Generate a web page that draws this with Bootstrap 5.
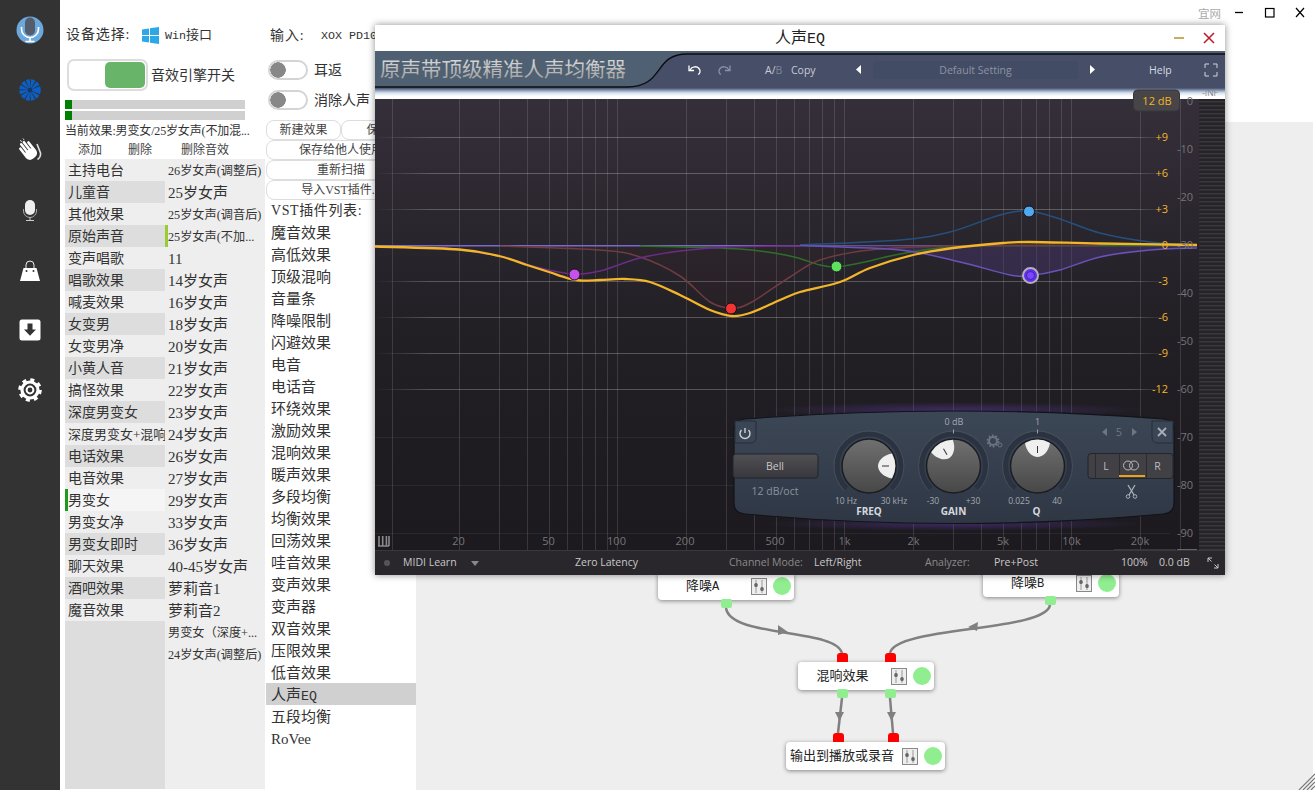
<!DOCTYPE html>
<html lang="zh">
<head>
<meta charset="utf-8">
<title>音效</title>
<link href="https://cdn.jsdelivr.net/npm/bootstrap@5.3.0/dist/css/bootstrap.min.css" rel="stylesheet">
<style>
html,body{margin:0;width:1315px;height:790px;overflow:hidden;background:#fff}
body{font-family:"Liberation Serif","Noto Sans CJK SC",serif;color:#333;font-size:14px}
.shell{width:1315px;height:790px;position:relative}
.railbar{width:60px;background:#333;flex:none}
.railbar>div{height:60px;display:flex;align-items:center;justify-content:center}
.lpane{width:205px;padding:25px 0 0 5px;flex:none;margin-right:1px}
.mpane{width:150px;padding-top:25px;flex:none;overflow:hidden}
.devrow{height:20px;line-height:22px;white-space:nowrap;padding-left:1px}
.devlab{display:inline-block;width:76px;letter-spacing:.9px;flex:none}
.inlab{display:inline-block;width:51px;letter-spacing:.9px;flex:none}
.halfw{font-family:"Liberation Mono","Noto Sans CJK SC",monospace;font-size:11.7px}
.enginetoggle{width:81px;height:32px;border:2px solid #ddd;border-radius:7px;padding:1px 1px 1px 0;margin-left:2px;justify-content:flex-end}
.enginetoggle i{display:block;width:40px;height:26px;background:#68b468;border-radius:5px}
.meterbar{width:180px;height:9px;background:#d0d0d0;margin-bottom:2px}
.meterbar i{display:block;width:7px;height:9px;background:#008000}
.curfx{font-size:12px;line-height:21px;height:18px;margin-top:1px;white-space:nowrap;letter-spacing:-.15px}
.actrow{font-size:12px;height:20px;line-height:23px;color:#444}
.actrow span:nth-child(1){margin-left:13px}.actrow span:nth-child(2){margin-left:26px}.actrow span:nth-child(3){margin-left:29px}
.collist{width:100px;height:630px}
.cola{background:#ddd}.colb{background:#eee}
.fxrow{height:22px;line-height:24px;padding-left:3px;white-space:nowrap;overflow:hidden}
.cola .fxrow{background:#eee;font-size:14px}
.cola .fxrow:nth-child(even){background:#ddd}
.cola .fxrow.picked{background:#f5f5f5;border-left:3px solid #1e9a1e;padding-left:0}
.colb .fxrow{font-size:15px}
.colb .tiny{font-size:12.2px}
.colb .tick{border-left:3px solid #9acd32;padding-left:0}
.sm13{font-size:13px}
.swrow{height:20px;margin:0 0 10px 2px;gap:6px;line-height:22px}
.swrow .form-check-input{width:40px;height:20px;margin:0;float:none;border:2px solid #d4d4d4;border-radius:10px;background:#fff radial-gradient(circle at 8px 50%,#888 7.5px,transparent 8px);background-size:auto;flex:none}
.btnrow .btn,.wbtn{font-size:12px;height:20px;line-height:18px;padding:0;border:1px solid #ddd;border-radius:8px;background:#fff;color:#444;display:block}
.vsthead{height:21px;line-height:22px;padding-left:5px;letter-spacing:.6px}
.vstrow{height:22px;line-height:24px;padding-left:5px;font-size:15px;white-space:nowrap}
.vstrow.chosen{background:#d0d0d0}
.eqlat{font-family:"Liberation Mono",monospace;font-size:13.3px}
.cvpane{min-width:0}
.topstrip{height:122px;flex:none;position:relative}
.sitelink{font-size:11.5px;color:#aaa;line-height:16px}
.winbtns{gap:0;padding-top:5px}
.winbtns svg{display:block}
.flowbg{background:#eee;position:relative;margin-right:2px}
.wirelayer{position:absolute;left:0;top:0;overflow:visible}
.fxnode{position:absolute;height:28px;background:#fff;border-radius:4px;box-shadow:0 1px 4px rgba(0,0,0,.45);padding-right:3px;gap:6px}
.fxnode .nm{flex:1;text-align:center;font-size:13px;color:#222;white-space:nowrap;padding-left:2px}
.fxnode .nm span{font-family:"Liberation Mono",monospace;font-size:12px}
.fxnode .lamp{width:18px;height:18px;border-radius:50%;background:#90ee90;flex:none}
.fxnode svg{flex:none}
.portg,.portr{position:absolute;width:11px;height:9px;border-radius:2px}
.portg{background:#90ee90;bottom:-8px}
.portr{background:#f00;top:-9px;border-radius:3px 3px 0 0}
.plugwin{position:absolute;left:375px;top:25px;width:850px;height:550px;background:#fff;box-shadow:0 0 7px rgba(0,0,0,.45);z-index:5}
.plugtitle{height:26px;position:relative;font-size:16px;line-height:26px;color:#222}
.plugtitle .ttl{font-family:"Liberation Mono",monospace;font-size:15px}
.plugtitle .wc{position:absolute;top:6px}
.plughead{height:37px;display:block}
.plugfade{height:11px;background:linear-gradient(#46506c,#8a9ab5 22%,#d8e2ee 45%,#fff 75%)}
.plugeq{display:block;overflow:visible}
.plugfoot{height:25px;background:#2a272c;border-top:1px solid #3a383c;display:grid;grid-template-columns:28px 68px 104px 154px 85px 111px 69px 127px 38px 48px 1fr;align-items:center;font-family:"Open Sans",sans-serif;font-size:10.5px;color:#c8c8c8;white-space:nowrap}
.plugfoot .dim{color:#8a8a8a}
.eqtx{font-family:"Open Sans",sans-serif}
</style>
</head>
<body>
<div class="shell d-flex">
  <aside class="railbar d-flex flex-column">
    <div><svg width="28" height="28" viewBox="0 0 28 28"><circle cx="14" cy="14" r="13.5" fill="#6ca8dc"/><rect x="9" y="1.5" width="10" height="18" rx="5" fill="#555c6c"/><path d="M5.5 11v2a8.5 8.5 0 0 0 17 0v-2" fill="none" stroke="#fff" stroke-width="1.6"/><path d="M14 21.5V25M9.5 25.5h9" stroke="#fff" stroke-width="1.6"/></svg></div>
    <div><svg width="22" height="22" viewBox="0 0 22 22"><circle cx="11" cy="11" r="6.5" fill="none" stroke="#0a60c8" stroke-width="8.5" stroke-dasharray="2.6 .8"/><circle cx="11" cy="11" r="2" fill="#0a3a78"/></svg></div>
    <div><svg width="24" height="24" viewBox="0 0 24 24"><g fill="#fff"><g transform="rotate(-38 12 13)"><rect x="4.500" y="11" width="12.800" height="10" rx="5"/><rect x="4.500" y="4" width="2.600" height="12" rx="1.300"/><rect x="7.900" y="1" width="2.600" height="14" rx="1.300"/><rect x="11.300" y="1" width="2.600" height="14" rx="1.300"/><rect x="14.700" y="4" width="2.600" height="12" rx="1.300"/></g></g><path d="M19 6l3.500 9c.5 3-1 5-3 6.500" stroke="#ddd" stroke-width="1.600" fill="none"/><path d="M2 2.500l2 1M5 .5l1.200 1.600" stroke="#ddd" stroke-width="1"/></svg></div>
    <div><svg width="22" height="24" viewBox="0 0 22 24"><rect x="6" y="2" width="10" height="15" rx="5" fill="#eee"/><path d="M4.5 11v2a6.5 6.5 0 0 0 13 0v-2" fill="none" stroke="#aaa" stroke-width="1"/><path d="M11 19.5V22M7 22.5h8" stroke="#ccc" stroke-width="1"/></svg></div>
    <div><svg width="22" height="24" viewBox="0 0 22 24"><path d="M4.500 10h13l3.500 13H1z" fill="#fff"/><path d="M7 10V7a4 4 0 0 1 8 0v3" fill="none" stroke="#eee" stroke-width="1"/><circle cx="7.5" cy="13" r="1" fill="#333"/><circle cx="14.5" cy="13" r="1" fill="#333"/></svg></div>
    <div><svg width="22" height="22" viewBox="0 0 22 22"><rect x=".5" y=".5" width="21" height="21" rx="2.5" fill="#fff"/><path d="M8.5 4.5h5v6H17l-6 6.2-6-6.2h3.500z" fill="#333"/></svg></div>
    <div><svg width="24" height="24" viewBox="0 0 24 24"><circle cx="12" cy="12" r="8" fill="none" stroke="#fff" stroke-width="3.2"/><circle cx="12" cy="12" r="10.3" fill="none" stroke="#fff" stroke-width="3" stroke-dasharray="4 4.09"/><circle cx="12" cy="12" r="3.4" fill="none" stroke="#fff" stroke-width="2"/></svg></div>
  </aside>

  <section class="lpane">
    <div class="devrow d-flex align-items-center"><span class="devlab">设备选择:</span><svg width="17" height="17" viewBox="0 0 17 17" fill="#2aa8e8"><path d="M0 2.500l7-1v6.500H0zM8 1.300l9-1.300v8H8zM0 9h7v6.500l-7-1zM8 9h9v8l-9-1.300z"/></svg><span class="sm13" style="margin-left:6px"><span class="halfw">Win</span>接口</span></div>
    <div class="d-flex align-items-center" style="margin-top:14px">
      <div class="enginetoggle d-flex"><i></i></div><span style="margin-left:3px">音效引擎开关</span>
    </div>
    <div class="meterbar" style="margin-top:9px"><i></i></div>
    <div class="meterbar mb-0"><i></i></div>
    <div class="curfx">当前效果:男变女/25岁女声(不加混...</div>
    <div class="actrow d-flex"><span>添加</span><span>删除</span><span>删除音效</span></div>
    <div class="d-flex">
      <div class="collist cola">
        <div class="fxrow">主持电台</div><div class="fxrow">儿童音</div><div class="fxrow">其他效果</div><div class="fxrow">原始声音</div><div class="fxrow">变声唱歌</div><div class="fxrow">唱歌效果</div><div class="fxrow">喊麦效果</div><div class="fxrow">女变男</div><div class="fxrow">女变男净</div><div class="fxrow">小黄人音</div><div class="fxrow">搞怪效果</div><div class="fxrow">深度男变女</div><div class="fxrow"><span class="sm13">深度男变女+混响</span></div><div class="fxrow">电话效果</div><div class="fxrow">电音效果</div><div class="fxrow picked">男变女</div><div class="fxrow">男变女净</div><div class="fxrow">男变女即时</div><div class="fxrow">聊天效果</div><div class="fxrow">酒吧效果</div><div class="fxrow">魔音效果</div>
      </div>
      <div class="collist colb">
        <div class="fxrow tiny">26岁女声(调整后)</div><div class="fxrow">25岁女声</div><div class="fxrow tiny">25岁女声(调音后)</div><div class="fxrow tiny tick">25岁女声(不加...</div><div class="fxrow">11</div><div class="fxrow">14岁女声</div><div class="fxrow">16岁女声</div><div class="fxrow">18岁女声</div><div class="fxrow">20岁女声</div><div class="fxrow">21岁女声</div><div class="fxrow">22岁女声</div><div class="fxrow">23岁女声</div><div class="fxrow">24岁女声</div><div class="fxrow">26岁女声</div><div class="fxrow">27岁女声</div><div class="fxrow">29岁女声</div><div class="fxrow">33岁女声</div><div class="fxrow">36岁女声</div><div class="fxrow">40-45岁女声</div><div class="fxrow">萝莉音1</div><div class="fxrow">萝莉音2</div><div class="fxrow tiny">男变女（深度+...</div><div class="fxrow tiny">24岁女声(调整后)</div>
      </div>
    </div>
  </section>

  <section class="mpane">
    <div class="devrow d-flex" style="padding-left:4px"><span class="inlab">输入:</span><span class="halfw">XOX PD10</span></div>
    <div style="height:15px"></div>
    <div class="swrow d-flex form-switch p-0"><input class="form-check-input" type="checkbox" aria-label="耳返"><span>耳返</span></div>
    <div class="swrow d-flex form-switch p-0"><input class="form-check-input" type="checkbox" aria-label="消除人声"><span>消除人声</span></div>
    <div class="btnrow d-flex"><button class="btn flex-fill w-50">新建效果</button><button class="btn flex-fill w-50">保存</button></div>
    <button class="wbtn w-100">保存给他人使用</button>
    <button class="wbtn w-100">重新扫描</button>
    <button class="wbtn w-100">导入VST插件...</button>
    <div class="vsthead">VST插件列表:</div>
    <div class="vstrow">魔音效果</div><div class="vstrow">高低效果</div><div class="vstrow">顶级混响</div><div class="vstrow">音量条</div><div class="vstrow">降噪限制</div><div class="vstrow">闪避效果</div><div class="vstrow">电音</div><div class="vstrow">电话音</div><div class="vstrow">环绕效果</div><div class="vstrow">激励效果</div><div class="vstrow">混响效果</div><div class="vstrow">暖声效果</div><div class="vstrow">多段均衡</div><div class="vstrow">均衡效果</div><div class="vstrow">回荡效果</div><div class="vstrow">哇音效果</div><div class="vstrow">变声效果</div><div class="vstrow">变声器</div><div class="vstrow">双音效果</div><div class="vstrow">压限效果</div><div class="vstrow">低音效果</div><div class="vstrow chosen">人声<span class="eqlat">EQ</span></div><div class="vstrow">五段均衡</div><div class="vstrow">RoVee</div>
  </section>

  <section class="cvpane flex-grow-1 d-flex flex-column">
    <div class="topstrip d-flex justify-content-end">
      <span class="sitelink" style="margin-top:6px;margin-right:9px">宜网</span>
      <div class="winbtns d-flex">
        <svg width="30" height="16" viewBox="0 0 30 16"><path d="M5 7.500h8" stroke="#000" stroke-width="1.300"/></svg>
        <svg width="30" height="16" viewBox="0 0 30 16"><rect x="5.500" y="3.500" width="8.500" height="8.500" fill="none" stroke="#000" stroke-width="1.200"/></svg>
        <svg width="25" height="16" viewBox="0 0 25 16"><path d="M6 3l8 9M14 3l-8 9" stroke="#000" stroke-width="1.200"/></svg>
      </div>
    </div>
    <div class="flowbg flex-grow-1">
      <svg class="wirelayer" width="897" height="668" viewBox="416 122 897 668">
        <g fill="none" stroke="#808080" stroke-width="2.500">
          <path d="M726 608C730 638 835 628 842 653"/>
          <path d="M1050 605C1046 632 895 626 890 653"/>
          <path d="M842 698L838 733"/>
          <path d="M890 698L893 733"/>
        </g>
        <g fill="#808080">
          <path d="M778 625l10 7-10 3z"/><path d="M978 622l-10 5 9 4z"/>
          <path d="M835 712h9l-4.500 9z"/><path d="M887 712h9l-4.500 9z"/>
        </g>
        <g stroke="#777" stroke-width="1.100"><path d="M1299 790l16-16M1303 790l12-12M1307 790l8-8M1311 790l4-4"/></g>
      </svg>
      <div class="fxnode d-flex align-items-center" style="left:242px;top:450px;width:136px"><span class="nm">降噪<span>A</span></span><svg width="16" height="17" viewBox="0 0 16 17"><use href="#slideico"/></svg><span class="lamp"></span><span class="portg" style="left:63px"></span></div>
      <div class="fxnode d-flex align-items-center" style="left:567px;top:447px;width:136px"><span class="nm">降噪<span>B</span></span><svg width="16" height="17" viewBox="0 0 16 17"><use href="#slideico"/></svg><span class="lamp"></span><span class="portg" style="left:62px"></span></div>
      <div class="fxnode d-flex align-items-center" style="left:382px;top:540px;width:136px"><span class="nm">混响效果</span><svg width="16" height="17" viewBox="0 0 16 17"><use href="#slideico"/></svg><span class="lamp"></span><span class="portr" style="left:39px"></span><span class="portr" style="left:87px"></span><span class="portg" style="left:39px"></span><span class="portg" style="left:87px"></span></div>
      <div class="fxnode d-flex align-items-center" style="left:370px;top:620px;width:159px"><span class="nm">输出到播放或录音</span><svg width="16" height="17" viewBox="0 0 16 17"><use href="#slideico"/></svg><span class="lamp"></span><span class="portr" style="left:47px"></span><span class="portr" style="left:102px"></span></div>
    </div>
  </section>

  <div class="plugwin d-flex flex-column">
    <div class="plugtitle text-center">人声<span class="ttl">EQ</span>
      <svg class="wc" style="left:798px" width="12" height="14" viewBox="0 0 12 14"><path d="M1 7h10" stroke="#b8902c" stroke-width="1.500"/></svg>
      <svg class="wc" style="left:828px" width="12" height="14" viewBox="0 0 12 14"><path d="M1 2l10 10M11 2L1 12" stroke="#c01828" stroke-width="1.500"/></svg>
    </div>
    <svg class="plughead" width="850" height="37" viewBox="0 0 850 37">
      <defs>
        <linearGradient id="lg" x1="0" y1="0" x2="0" y2="1"><stop offset="0" stop-color="#ececec"/><stop offset=".55" stop-color="#bcbcbc"/><stop offset="1" stop-color="#949494"/></linearGradient>
        <g id="slideico"><rect x=".5" y=".5" width="15" height="16" fill="#eee" stroke="#888"/><path d="M5 2v13M11 2v13" stroke="#999"/><rect x="3.300" y="5" width="3.400" height="4" rx="1.500" fill="#666"/><rect x="9.300" y="9" width="3.400" height="4" rx="1.500" fill="#666"/></g>
      </defs>
      <rect width="850" height="37" fill="#4f6072"/>
      <path d="M252 36C290 36 278 3 312 3H850V37H252z" fill="#464e68"/>
      <path d="M0 36H252C290 36 278 3 312 3H850" fill="none" stroke="#0c0c10" stroke-width="1.300"/>
      <text x="5" y="26" fill="url(#lg)" font-family="Noto Sans CJK SC" font-size="20.500" font-weight="400">原声带顶级精准人声均衡器</text>
      <g fill="none" stroke="#fff" stroke-width="1.300"><path d="M315 19c2-4 7-4 9-1.500s1 5-1 6"/><path d="M314 14.500v5h5" /></g>
      <g fill="none" stroke="#8a93a8" stroke-width="1.300"><path d="M354 19c-2-4-7-4-9-1.500s-1 5 1 6"/><path d="M355 14.500v5h-5"/></g>
      <rect x="498" y="10" width="205" height="18" rx="3" fill="#434c65"/>
      <g font-family="Open Sans" font-size="10.500" fill="#c8ccd6">
        <text x="390" y="23">A/<tspan fill="#7c8498">B</tspan></text>
        <text x="416" y="23">Copy</text>
        <text x="600.500" y="23" text-anchor="middle" fill="#8d93a3">Default Setting</text>
        <text x="774" y="23" fill="#d8dbe2">Help</text>
      </g>
      <path d="M486 14v9l-5-4.500zM715 14v9l5-4.500z" fill="#fff"/>
      <path d="M830 17v-4h4M838 13h4v4M842 21v4h-4M834 25h-4v-4" fill="none" stroke="#d0d4dc" stroke-width="1"/>
    </svg>
    <div class="plugfade"></div>
    <svg class="plugeq" width="850" height="451" viewBox="375 99 850 451">
      <defs>
        <linearGradient id="bgg" x1="0" y1="0" x2="0" y2="1"><stop offset="0" stop-color="#352f39"/><stop offset=".5" stop-color="#221f25"/><stop offset="1" stop-color="#1c1a1e"/></linearGradient>
        <linearGradient id="hl" gradientUnits="userSpaceOnUse" x1="375" y1="0" x2="1170" y2="0"><stop offset="0" stop-color="#fff" stop-opacity="0"/><stop offset=".07" stop-color="#fff" stop-opacity=".24"/><stop offset=".95" stop-color="#fff" stop-opacity=".24"/><stop offset="1" stop-color="#fff" stop-opacity="0"/></linearGradient>
        <linearGradient id="pang" x1="0" y1="0" x2="0" y2="1"><stop offset="0" stop-color="#3c4756"/><stop offset="1" stop-color="#2f3745"/></linearGradient>
        <linearGradient id="kng" x1="0" y1="0" x2="0" y2="1"><stop offset="0" stop-color="#707070"/><stop offset="1" stop-color="#474747"/></linearGradient>
        <linearGradient id="btg" x1="0" y1="0" x2="0" y2="1"><stop offset="0" stop-color="#505054"/><stop offset="1" stop-color="#38383c"/></linearGradient>
        <radialGradient id="glo"><stop offset="0" stop-color="#6a3fc0" stop-opacity=".4"/><stop offset="1" stop-color="#6a3fc0" stop-opacity="0"/></radialGradient>
        <pattern id="mt" width="4" height="4" patternUnits="userSpaceOnUse" y="1"><rect width="4" height="4" fill="#272429"/><rect width="4" height="1.500" fill="#3a373c"/></pattern>
        <g id="knobface">
          <path d="M-22.600 22.600A32 32 0 1 1 22.600 22.600" fill="none" stroke="#2b3340" stroke-width="5"/>
          <path d="M-24.700 24.700A35 35 0 1 1 24.700 24.700" fill="none" stroke="#4a5260" stroke-width=".8"/>
          <circle r="27" fill="url(#kng)" stroke="#1b1d22" stroke-width="1.500"/>
        </g>
        <g id="knobptr">
          <path d="M-12.500 -23A26.200 26.200 0 0 1 12.500 -23C11 -14 5 -9 0 -9C-5 -9 -11 -14 -12.500 -23z" fill="#efefef"/>
          <path d="M0 -20V-13" stroke="#333" stroke-width="1"/>
        </g>
      </defs>
      <rect x="375" y="99" width="850" height="451" fill="url(#bgg)"/>
      <path stroke="#fff" stroke-opacity=".13" d="M392.500 99V550M459.500 99V550M499.500 99V550M527.500 99V550M549.500 99V550M567.500 99V550M582.500 99V550M595.500 99V550M607.500 99V550M617.500 99V550M686.500 99V550M726.500 99V550M754.500 99V550M776.500 99V550M794.500 99V550M809.500 99V550M822.500 99V550M834.500 99V550M844.500 99V550M913.500 99V550M953.500 99V550M981.500 99V550M1003.500 99V550M1021.500 99V550M1036.500 99V550M1049.500 99V550M1061.500 99V550M1071.500 99V550M1140.500 99V550M1180.500 99V550"/>
      <path stroke="url(#hl)" d="M375 137.500H1170M375 173.500H1170M375 209.500H1170M375 281.500H1170M375 317.500H1170M375 353.500H1170M375 389.500H1170"/>
      <path stroke="#fff" stroke-opacity=".06" d="M375 437.500H1170M375 485.500H1170M375 533.500H1170"/>
      <rect x="1199" y="99" width="26" height="451" fill="url(#mt)"/>

      <path data-pts="800,245 900,250 960,262 1010,275 1030,275.500 1060,270 1100,257 1150,250 1197,248" data-close="245" fill="#4a3a78" fill-opacity=".4" stroke="none"/>
      <path data-pts="500,246 600,250 640,257 680,276 710,302 731,308 750,303 790,277 820,260 870,250 950,246 1000,245" data-close="245" fill="#5a2a2a" fill-opacity=".08" stroke="none"/>
      <g fill="none" stroke-width="1.500">
        <path d="M375 245.700H800" stroke="#7b68c8"/>
        <path d="M800 245.700H1197" stroke="#6e5c9c" stroke-width="1"/>
        <path data-pts="640,246 740,249 790,256 820,265 836,267 860,263 900,254 950,247 1000,245.500 1197,245.500" stroke="#2f6e2a"/>
        <path data-pts="500,246 600,250 640,257 680,276 710,302 731,308 750,303 790,277 820,260 870,250 950,246 1100,245.500" stroke="#6f3c42"/>
        <path data-pts="440,247 499,256 540,268 574,274 600,271 640,258 680,251 730,247 800,246" stroke="#6a2c84"/>
        <path data-pts="800,245 900,240 950,232 1000,215 1029,211 1060,219 1100,233 1150,242 1197,245" stroke="#25507e"/>
        <path data-pts="800,245.500 900,250 960,262 1010,275 1030,275.500 1060,270 1100,257 1150,250 1197,248" stroke="#6a52b8"/>
      </g>
      <path data-pts="375,246.500 459,249.500 499,256 527,265 549,272 567,278 580,280.500 600,280 625,279 650,282 680,295 710,310 732,316 750,313 780,300 800,292 840,282 870,268 913,255 953,248 1003,243 1030,242 1100,243.500 1197,245" fill="none" stroke="#f3b52a" stroke-width="2.300"/>
      <g stroke="#141216" stroke-width="1">
        <circle cx="574.500" cy="274.500" r="5.500" fill="#c850ec"/>
        <circle cx="731" cy="308.500" r="5.500" fill="#f23434"/>
        <circle cx="836.500" cy="266.500" r="5.500" fill="#5fe05f"/>
        <circle cx="1029" cy="211.500" r="5.500" fill="#52a8ee"/>
      </g>
      <circle cx="1030.500" cy="275.500" r="7.500" fill="#6030f0" stroke="#b4b0b8" stroke-width="2"/>
      <circle cx="1030.500" cy="275.500" r="4" fill="#7a46ff" stroke="#3a1ea0" stroke-width=".8"/>

      <g class="eqtx" font-size="11" fill="#f3b52a" text-anchor="end">
        <text x="1168" y="141">+9</text><text x="1168" y="177">+6</text><text x="1168" y="213">+3</text><text x="1168" y="249">0</text><text x="1168" y="285">-3</text><text x="1168" y="321">-6</text><text x="1168" y="357">-9</text><text x="1168" y="393">-12</text>
      </g>
      <g class="eqtx" font-size="11" fill="#77747a" text-anchor="end">
        <text x="1193" y="105">0</text><text x="1193" y="153">-10</text><text x="1193" y="201">-20</text><text x="1193" y="249">-30</text><text x="1193" y="297">-40</text><text x="1193" y="345">-50</text><text x="1193" y="393">-60</text><text x="1193" y="441">-70</text><text x="1193" y="489">-80</text><text x="1193" y="537">-90</text>
      </g>
      <rect x="1133.500" y="90" width="46" height="21" rx="4" fill="#474548" stroke="#38363a"/>
      <text class="eqtx" x="1157" y="105" font-size="11" fill="#f3b52a" text-anchor="middle">12 dB</text>
      <text class="eqtx" x="1210" y="96" font-size="8.500" fill="#85858a" text-anchor="middle">-INF</text>
      <path d="M1114 550.500H1176" stroke="#55535a" stroke-width="2"/><path d="M1177 550.500H1197" stroke="#b0b0b0" stroke-width="2"/>

      <g class="eqtx" font-size="11" fill="#77747a" text-anchor="middle">
        <text x="458.500" y="545">20</text><text x="548.500" y="545">50</text><text x="616.500" y="545">100</text><text x="685" y="545">200</text><text x="775" y="545">500</text><text x="844.500" y="545">1k</text><text x="913.500" y="545">2k</text><text x="1003" y="545">5k</text><text x="1071.500" y="545">10k</text><text x="1140" y="545">20k</text>
      </g>
      <path d="M378 546h11M379 536v10M382.700 536v10M386.400 536v10M389 536v10" fill="none" stroke="#8a8a8a" stroke-width="1.600"/>

      <ellipse cx="954" cy="410" rx="190" ry="8" fill="url(#glo)"/>
      <ellipse cx="954" cy="524" rx="190" ry="7" fill="url(#glo)"/>
      <path d="M745 419Q954 403 1163 419Q1174 420 1174 431V503Q1174 513 1163 514Q954 533 745 514Q734 513 734 503V431Q734 420 745 419z" fill="url(#pang)" stroke="#12141a" stroke-width="1.200"/>
      <path d="M735 421H756V437Q756 443 750 443H735z" fill="#3a4656" stroke="#262d38"/>
      <path d="M745 428v5" stroke="#d0d0d0" stroke-width="1.400"/><path d="M741.500 430a5 5 0 1 0 7 0" fill="none" stroke="#d0d0d0" stroke-width="1.400"/>
      <path d="M1173 421H1152V437Q1152 443 1158 443H1173z" fill="#3a4656" stroke="#262d38"/>
      <path d="M1158 428l8 8M1166 428l-8 8" stroke="#a8aeb8" stroke-width="1.800"/>
      <rect x="733" y="454" width="85" height="24" rx="3" fill="url(#btg)" stroke="#22252c"/>

      <g transform="translate(869 466)"><use href="#knobface"/><g transform="rotate(90)"><use href="#knobptr"/></g></g>
      <g transform="translate(953.500 466)"><use href="#knobface"/><g transform="rotate(-30)"><use href="#knobptr"/></g></g>
      <g transform="translate(1037.500 466)"><use href="#knobface"/><use href="#knobptr"/></g>
      <path d="M953.500 429.500v4M1037.500 429.500v4" stroke="#9aa0aa"/>

      <g class="eqtx" fill="#a2a8b2" text-anchor="middle" font-size="10.500">
        <text x="775" y="470" fill="#c8c8c8">Bell</text>
        <text x="775" y="495" fill="#8a929e">12 dB/oct</text>
        <text x="954" y="425" font-size="9">0 dB</text><text x="1037.500" y="425" font-size="9">1</text>
        <text x="846" y="504" font-size="8.500">10 Hz</text><text x="894" y="504" font-size="8.500">30 kHz</text>
        <text x="933" y="504" font-size="8.500">-30</text><text x="973" y="504" font-size="8.500">+30</text>
        <text x="1019" y="504" font-size="8.500">0.025</text><text x="1057" y="504" font-size="8.500">40</text>
        <text x="869" y="515" font-size="10" font-weight="700" fill="#d4d8de">FREQ</text>
        <text x="953.500" y="515" font-size="10" font-weight="700" fill="#d4d8de">GAIN</text>
        <text x="1036.500" y="515" font-size="10" font-weight="700" fill="#d4d8de">Q</text>
        <text x="1119" y="436" font-size="11" fill="#6c7684">5</text>
      </g>
      <path d="M1107 428v8l-5-4zM1132 428v8l5-4z" fill="#6c7684"/>
      <g fill="none" stroke="#6a7482" stroke-width="2"><circle cx="993" cy="441" r="4"/></g>
      <circle cx="993" cy="441" r="5.500" fill="none" stroke="#6a7482" stroke-width="1.800" stroke-dasharray="1.800 1.650"/>
      <circle cx="1000" cy="445" r="2" fill="none" stroke="#6a7482"/>

      <rect x="1088" y="453.500" width="85" height="25" rx="3" fill="#404045" stroke="#22252c"/>
      <path d="M1119.500 454V478M1146.500 454V478M1095.500 454V478" stroke="#2c2c30"/>
      <g class="eqtx" font-size="10.500" fill="#b8bcc4" text-anchor="middle"><text x="1106" y="470">L</text><text x="1157.500" y="470">R</text></g>
      <circle cx="1128" cy="465.500" r="4.500" fill="none" stroke="#b8bcc4"/><circle cx="1134" cy="465.500" r="4.500" fill="none" stroke="#b8bcc4"/>
      <rect x="1119" y="475" width="26" height="2" fill="#e8a41c"/>
      <path d="M1128 485l6 10M1135 485l-6 10" stroke="#aab0ba" stroke-width="1.300"/><circle cx="1128" cy="496.500" r="1.800" fill="none" stroke="#aab0ba"/><circle cx="1135" cy="496.500" r="1.800" fill="none" stroke="#aab0ba"/>
    </svg>
    <div class="plugfoot">
      <svg width="28" height="10" viewBox="0 0 28 10"><circle cx="12" cy="5" r="3" fill="#555"/></svg>
      <span>MIDI Learn</span>
      <svg width="30" height="8" viewBox="0 0 30 8"><path d="M0 1h8L4 6z" fill="#888" transform="translate(0 1)"/></svg>
      <span>Zero Latency</span>
      <span class="dim">Channel Mode:</span>
      <span>Left/Right</span>
      <span class="dim">Analyzer:</span>
      <span>Pre+Post</span>
      <span>100%</span>
      <span>0.0 dB</span>
      <svg width="12" height="12" viewBox="0 0 12 12"><path d="M1 1h4M1 1v4M1 1l3.500 3.500M11 11H7M11 11V7M11 11L7.500 7.500" stroke="#c8c8c8" fill="none"/></svg>
    </div>
  </div>
</div>
<script>
document.querySelectorAll('[data-pts]').forEach(function(el){
  var p=el.getAttribute('data-pts').trim().split(/\s+/).map(function(s){return s.split(',').map(Number);});
  var d='M'+p[0][0]+' '+p[0][1];
  for(var i=0;i<p.length-1;i++){
    var a=p[Math.max(i-1,0)],b=p[i],c=p[i+1],e=p[Math.min(i+2,p.length-1)];
    d+='C'+(b[0]+(c[0]-a[0])/6)+' '+(b[1]+(c[1]-a[1])/6)+' '+(c[0]-(e[0]-b[0])/6)+' '+(c[1]-(e[1]-b[1])/6)+' '+c[0]+' '+c[1];
  }
  var close=el.getAttribute('data-close');
  if(close){d+='L'+p[p.length-1][0]+' '+close+'L'+p[0][0]+' '+close+'Z';}
  el.setAttribute('d',d);
});
</script>
<script src="https://cdn.jsdelivr.net/npm/bootstrap@5.3.0/dist/js/bootstrap.bundle.min.js"></script>
</body>
</html>
